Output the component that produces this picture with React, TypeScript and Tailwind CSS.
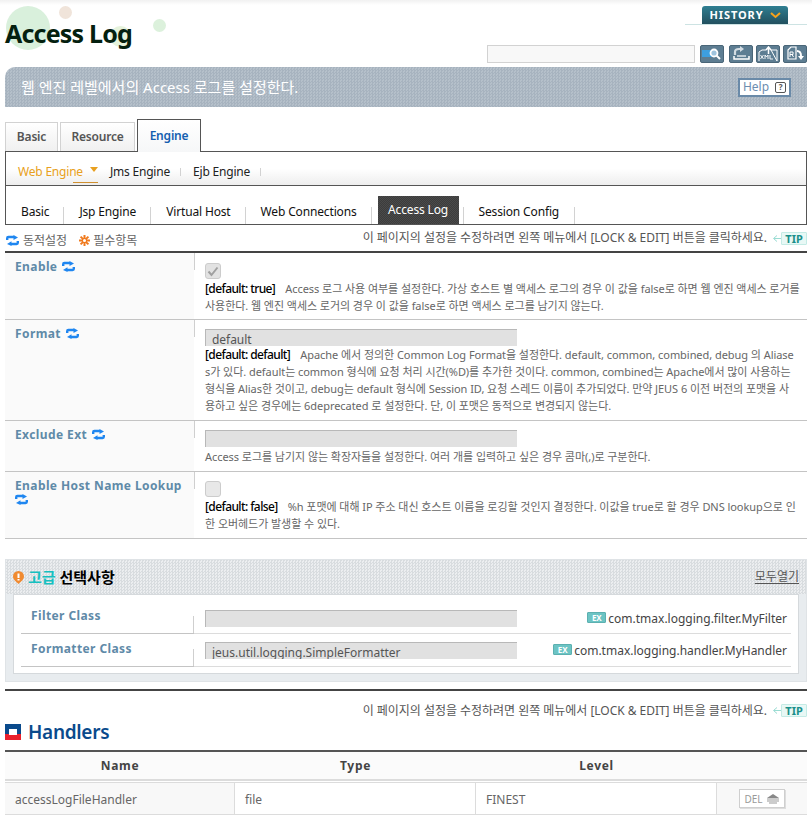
const SyncIcon = ({ className = "" }: { className?: string }) => (
  <svg width="13" height="11" viewBox="0 0 13 11" className={className}>
    <path d="M1.200 5V3.200q0-1.200 1.200-1.200H8" fill="none" stroke="#1f86f0" strokeWidth="2.400" />
    <path d="M7.500 0l4.500 2.500-4.500 2.500z" fill="#1f86f0" />
    <path d="M11.800 6v1.800q0 1.200-1.200 1.200H5" fill="none" stroke="#1f86f0" strokeWidth="2.400" />
    <path d="M5.500 6.200 1 9l4.500 2z" fill="#1f86f0" />
  </svg>
);

const StarIcon = () => (
  <svg width="11" height="11" viewBox="0 0 11 11">
    <g stroke="#f07a1e" strokeWidth="2">
      <path d="M5.500 0v11M0 5.500h11M1.600 1.600l7.800 7.800M9.400 1.600l-7.800 7.800" />
    </g>
    <circle cx="5.500" cy="5.500" r="1.500" fill="#fff" />
  </svg>
);

const ToolBtn = ({ children }: { children: React.ReactNode }) => (
  <div className="flex h-[18px] w-6 items-center justify-center rounded-[2px] border border-[#4a6678] bg-[#5d7d92]">
    <svg width="22" height="16" viewBox="0 0 22 16">
      {children}
    </svg>
  </div>
);

const TipBadge = () => (
  <div className="flex items-center">
    <svg width="9" height="9" viewBox="0 0 9 9">
      <path d="M9 4.500H2M5 1.500 1.500 4.500 5 7.500" fill="none" stroke="#9adcd3" strokeWidth="1" />
    </svg>
    <div className="flex h-[13px] w-[26px] items-center justify-center rounded-[1px] border border-[#c4ebe5] bg-[#e8f8f5] text-[11px] font-bold leading-none text-[#1a8f8a]">
      TIP
    </div>
  </div>
);

const TipLine = () => (
  <div className="flex items-center gap-[5px] text-[12px] leading-none tracking-[-0.03px] text-[#555]">
    <span>이 페이지의 설정을 수정하려면 왼쪽 메뉴에서 [LOCK &amp; EDIT] 버튼을 클릭하세요.</span>
    <TipBadge />
  </div>
);

const Default = ({ children }: { children: React.ReactNode }) => (
  <span className="mr-[10px] text-[12px] font-medium tracking-[-0.6px] text-black">{children}</span>
);

const TextBox = ({ value }: { value?: string }) => (
  <div className="h-[17px] w-[312px] overflow-hidden border-t border-l border-[#b8b8b8] bg-[#e1e1e1] pl-[6px] text-[12px] leading-[19px] text-[#555]">
    {value}
  </div>
);

const Row = ({
  label,
  h,
  children,
}: {
  label: React.ReactNode;
  h: string;
  children: React.ReactNode;
}) => (
  <div className={`flex border-b border-[#c4c4c4] ${h}`}>
    <div className="w-[189px] shrink-0 bg-[#fafafa] pl-[10px] pt-[5px] text-[12px] font-bold leading-[17px] tracking-[0.4px] text-[#5f8aa8]">
      {label}
    </div>
    <div className="h-[17px] w-px shrink-0 bg-[#cfcfcf]" />
    <div className="min-w-0 flex-1 overflow-hidden whitespace-nowrap pl-[10px] text-[11px] leading-[17px] tracking-[-0.05px] text-[#666]">
      {children}
    </div>
  </div>
);

const OptionRow = ({
  label,
  value,
  example,
  rowH,
  labelTop,
  boxTop,
}: {
  label: string;
  value?: string;
  example: string;
  rowH: string;
  labelTop: string;
  boxTop: string;
}) => (
  <div className={`flex border-b border-[#dcdcdc] ${rowH}`}>
    <div className="-mb-px flex w-[173px] shrink-0 border-b border-[#c4c4c4]">
      <div className={`flex-1 pl-[10px] text-[12px] font-bold leading-[17px] tracking-[0.4px] text-[#5f8aa8] ${labelTop}`}>
        {label}
      </div>
      <div className="h-[17px] w-px self-end bg-[#cfcfcf]" />
    </div>
    <div className={`ml-[11px] ${boxTop}`}>
      <TextBox value={value} />
    </div>
    <div className={`flex flex-1 items-start justify-end pr-[4px] ${boxTop}`}>
      <span className="mr-[2px] mt-[2px] flex h-[11px] w-[19px] items-center justify-center rounded-[1px] border border-[#5cb0b0] bg-[#6cc4c4] text-[8px] font-bold leading-none text-white">
        EX
      </span>
      <span className="text-[12px] leading-[17px] text-[#444]">{example}</span>
    </div>
  </div>
);

const NAV = ["Basic", "Jsp Engine", "Virtual Host", "Web Connections"];

export default function App() {
  return (
    <div
      className="relative h-[821px] w-[812px] overflow-hidden bg-white text-[#555]"
      style={{ fontFamily: '"Noto Sans", "Noto Sans CJK KR", sans-serif' }}
    >
      <div className="h-[5px] bg-gradient-to-b from-[#f1f1f1] to-white" />

      {/* decor dots behind the title */}
      <div className="absolute left-[6px] top-[6px] h-[44px] w-[44px] rounded-full bg-[#d9f0dc]" />
      <div className="absolute left-[59px] top-[6px] h-[13px] w-[13px] rounded-full bg-[#f0e4da]" />
      <div className="absolute left-[153px] top-[19px] h-[13px] w-[13px] rounded-full bg-[#dcf1dc]" />
      <div className="absolute left-[110px] top-[26px] h-[21px] w-[21px] rounded-full bg-[#e6f3dc]" />

      {/* header */}
      <div className="relative flex h-[62px] justify-between pl-[5px] pr-[5px]">
        <h1 className="pt-[12px] text-[25px] font-bold leading-[32px] tracking-[-0.8px] text-[#04200f]">
          Access Log
        </h1>
        <div className="flex flex-col items-end">
          <div className="mt-[1px] flex h-[19px] w-[122px] items-end justify-center border-b border-[#cde3e3] pr-[2px]">
            <div className="flex h-[18px] w-[86px] items-center justify-center gap-[6px] rounded-t-[3px] bg-gradient-to-b from-[#2f7f92] to-[#22505f] pt-[1px] text-[11px] font-bold tracking-[0.9px] text-white">
              HISTORY
              <svg width="11" height="7" viewBox="0 0 11 7">
                <path d="M1 1l4.500 4L10 1" fill="none" stroke="#f5a21c" strokeWidth="2" />
              </svg>
            </div>
          </div>
          <div className="mt-[20px] flex items-center">
            <div className="mr-[5px] h-[18px] w-[208px] border border-[#d2d2d2] bg-[#f8f8f8]" />
            <div className="mr-[5px]">
              <ToolBtn>
                <rect x="1" y="4" width="10" height="7" fill="#3d9fe0" />
                <circle cx="13" cy="7" r="3.500" fill="#9fc4de" stroke="#fff" strokeWidth="1.800" />
                <path d="M15.500 9.500l3.500 3.500" stroke="#fff" strokeWidth="2" />
              </ToolBtn>
            </div>
            <div className="mr-[3px]">
              <ToolBtn>
                <path d="M5 9V6Q5 3 9 3h2" fill="none" stroke="#d4dde3" strokeWidth="2.200" />
                <path d="M10 0l4 3-4 3z" fill="#d4dde3" />
                <path d="M4 10v3h15v-3" fill="none" stroke="#fff" strokeWidth="1.500" />
                <path d="M7 10h9" stroke="#fff" strokeWidth="1.200" />
              </ToolBtn>
            </div>
            <div className="mr-[3px]">
              <ToolBtn>
                <path d="M2 15V6l3-2h4M14 4h6v11z" fill="none" stroke="#fff" strokeWidth="1" />
                <path d="M11.500 8V2M9 4l2.500-3L14 4" fill="none" stroke="#fff" strokeWidth="1.500" />
                <path d="M3.500 9l3 4M6.500 9l-3 4M8 13V9l1.500 2L11 9v4M13 9v4h3" fill="none" stroke="#fff" strokeWidth="0.900" />
              </ToolBtn>
            </div>
            <ToolBtn>
              <path d="M4 4l3-3h5v12H4z" fill="none" stroke="#fff" strokeWidth="1.200" />
              <path d="M6 11V6h3v2.500H6M8 8.500l1.500 2.500" fill="none" stroke="#fff" strokeWidth="1" />
              <path d="M13 5q4 0 4 5" fill="none" stroke="#fff" strokeWidth="2" />
              <path d="M14 10h6l-3 4z" fill="#fff" />
            </ToolBtn>
          </div>
        </div>
      </div>

      {/* banner */}
      <div className="mx-[5px] flex h-[40px] items-center justify-between rounded-tl-[10px] bg-[repeating-conic-gradient(#a7b3bf_0_25%,#b5c0ca_0_50%)] bg-[length:3px_3px] pl-[16px] pr-[16px]">
        <span className="text-[15px] text-white">웹 엔진 레벨에서의 Access 로그를 설정한다.</span>
        <div className="flex h-[19px] w-[53px] items-center justify-center gap-[6px] border-2 border-[#6a8aa8] bg-white text-[12px] leading-none text-[#6d8db0]">
          Help
          <span className="flex h-[11px] w-[11px] items-center justify-center rounded-[2px] border border-[#555] text-[8px] font-bold text-[#555]">
            ?
          </span>
        </div>
      </div>

      {/* main tabs */}
      <div className="ml-[5px] mt-[12px] flex h-[32px] items-end gap-[2px]">
        <div className="flex h-[29px] w-[53px] items-center justify-center border border-b-0 border-[#d2d2d2] bg-gradient-to-b from-white to-[#f0f0f0] text-[12px] font-semibold tracking-[-0.2px] text-[#555]">
          Basic
        </div>
        <div className="flex h-[29px] w-[75px] items-center justify-center border border-b-0 border-[#d2d2d2] bg-gradient-to-b from-white to-[#f0f0f0] text-[12px] font-semibold tracking-[-0.2px] text-[#555]">
          Resource
        </div>
        <div className="relative z-10 -mb-px flex h-[33px] w-[64px] items-center justify-center border border-b-0 border-[#555] bg-gradient-to-b from-white to-[#f6f7f8] text-[12px] font-semibold tracking-[-0.2px] text-[#1560b0]">
          Engine
        </div>
      </div>

      {/* engine nav */}
      <div className="mx-[5px] flex h-[35px] items-center border border-[#555] bg-gradient-to-b from-white via-white to-[#eeeeee] pl-[12px] pt-[6px] text-[12px] tracking-[-0.2px]">
        <span className="relative text-[#e8a020]">
          Web Engine
          <span className="absolute -bottom-[2px] -right-[15px] h-px w-[25px] bg-[#d09030]" />
        </span>
        <svg width="8" height="5" viewBox="0 0 8 5" className="mb-[4px] ml-[7px]">
          <path d="M0 0h8L4 5z" fill="#e8a020" />
        </svg>
        <span className="ml-[12px] text-[#222]">Jms Engine</span>
        <span className="mx-[10px] h-[8px] w-px bg-[#d2d2d2]" />
        <span className="ml-[2px] text-[#222]">Ejb Engine</span>
        <span className="ml-[10px] h-[8px] w-px bg-[#d2d2d2]" />
      </div>

      {/* sub nav */}
      <div className="mx-[5px] -mt-px flex h-[40px] items-end border border-[#555] pl-[15px] text-[12px] tracking-[-0.15px] text-[#111]">
        {NAV.map((item) => (
          <div key={item} className="flex items-end">
            <span className="pb-[4px] leading-[17px]">{item}</span>
            <span className="ml-[14px] mr-[15px] h-[17px] w-px bg-[#d2d2d2]" />
          </div>
        ))}
        <div className="-ml-[9px] flex h-[28px] w-[81px] items-center justify-center bg-[repeating-conic-gradient(#3c3c3c_0_25%,#4a4a4a_0_50%)] bg-[length:2px_2px] text-white">
          Access Log
        </div>
        <span className="ml-[4px] h-[17px] w-px bg-[#d2d2d2]" />
        <span className="px-[15px] pb-[4px] leading-[17px]">Session Config</span>
        <span className="h-[17px] w-px bg-[#d2d2d2]" />
      </div>

      {/* legend */}
      <div className="mx-[5px] flex h-[26px] items-center justify-between pl-[1px] text-[12px] text-[#666]">
        <div className="mt-[5px] flex items-center">
          <SyncIcon className="mr-[4px]" />
          <span>동적설정</span>
          <span className="ml-[12px] mr-[3px] flex">
            <StarIcon />
          </span>
          <span>필수항목</span>
        </div>
        <TipLine />
      </div>

      {/* properties */}
      <div className="mx-[5px] border-t-2 border-[#444]">
        <Row
          h="h-[67px]"
          label={
            <span className="flex items-center gap-[5px]">
              Enable <SyncIcon />
            </span>
          }
        >
          <div className="pt-[10px]">
            <div className="flex h-[16px] w-[16px] items-center justify-center rounded-[3px] border border-[#cccccc] bg-[#e2e2e2]">
              <svg width="12" height="11" viewBox="0 0 12 11">
                <path d="M1.500 5.500 4.500 9 10.500 1.500" fill="none" stroke="#a0a0a0" strokeWidth="2" />
              </svg>
            </div>
          </div>
          <div className="mt-[1px]">
            <Default>[default: true]</Default>
            Access 로그 사용 여부를 설정한다. 가상 호스트 별 액세스 로그의 경우 이 값을 false로 하면 웹 엔진 액세스 로거를
          </div>
          <div>사용한다. 웹 엔진 액세스 로거의 경우 이 값을 false로 하면 액세스 로그를 남기지 않는다.</div>
        </Row>
        <Row
          h="h-[101px]"
          label={
            <span className="flex items-center gap-[5px]">
              Format <SyncIcon />
            </span>
          }
        >
          <div className="pt-[9px]">
            <TextBox value="default" />
          </div>
          <div>
            <Default>[default: default]</Default>
            Apache 에서 정의한 Common Log Format을 설정한다. default, common, combined, debug 의 Aliase
          </div>
          <div>s가 있다. default는 common 형식에 요청 처리 시간(%D)를 추가한 것이다. common, combined는 Apache에서 많이 사용하는</div>
          <div>형식을 Alias한 것이고, debug는 default 형식에 Session ID, 요청 스레드 이름이 추가되었다. 만약 JEUS 6 이전 버전의 포맷을 사</div>
          <div>용하고 싶은 경우에는 6deprecated 로 설정한다. 단, 이 포맷은 동적으로 변경되지 않는다.</div>
        </Row>
        <Row
          h="h-[51px]"
          label={
            <span className="flex items-center gap-[5px]">
              Exclude Ext <SyncIcon />
            </span>
          }
        >
          <div className="pt-[9px]">
            <TextBox />
          </div>
          <div className="mt-[1px]">Access 로그를 남기지 않는 확장자들을 설정한다. 여러 개를 입력하고 싶은 경우 콤마(,)로 구분한다.</div>
        </Row>
        <Row
          h="h-[67px]"
          label={
            <div>
              <div>Enable Host Name Lookup</div>
              <SyncIcon />
            </div>
          }
        >
          <div className="pt-[9px]">
            <div className="h-[16px] w-[16px] rounded-[3px] border border-[#cccccc] bg-[#e8e8e8]" />
          </div>
          <div className="mt-[1px]">
            <Default>[default: false]</Default>
            %h 포맷에 대해 IP 주소 대신 호스트 이름을 로깅할 것인지 결정한다. 이값을 true로 할 경우 DNS lookup으로 인
          </div>
          <div>한 오버헤드가 발생할 수 있다.</div>
        </Row>
      </div>

      {/* advanced options */}
      <div className="mx-[5px] mt-[20px] h-[123px] border border-[#dfe3e6] bg-[#e8ecef] px-[7px]">
        <div className="-mx-[7px] flex h-[34px] items-center justify-between bg-[repeating-conic-gradient(#d8dcdf_0_25%,#eceef0_0_50%)] bg-[length:3px_3px] pl-[7px] pr-[7px]">
          <div className="flex items-center gap-[4px] text-[15px] font-bold leading-none">
            <svg width="11" height="13" viewBox="0 0 11 13">
              <path d="M5.500 0a5.500 5.500 0 0 1 5.500 5.500c0 3-3 5-5.500 7.500C3 10.500 0 8.500 0 5.500A5.500 5.500 0 0 1 5.500 0z" fill="#f08a30" />
              <rect x="4.500" y="2.500" width="2" height="4.500" fill="#fff" />
              <rect x="4.500" y="8" width="2" height="1.500" fill="#fff" />
            </svg>
            <span>
              <span className="text-[#16c0c0]">고급</span> <span className="text-black">선택사항</span>
            </span>
          </div>
          <span className="text-[12px] leading-none text-[#555] underline underline-offset-2">모두열기</span>
        </div>
        <div className="h-[80px] border border-[#d5d9dc] bg-white px-[7px]">
          <OptionRow
            label="Filter Class"
            example="com.tmax.logging.filter.MyFilter"
            rowH="h-[39px]"
            labelTop="pt-[12px]"
            boxTop="pt-[15px]"
          />
          <OptionRow
            label="Formatter Class"
            value="jeus.util.logging.SimpleFormatter"
            example="com.tmax.logging.handler.MyHandler"
            rowH="h-[33px]"
            labelTop="pt-[6px]"
            boxTop="pt-[8px]"
          />
        </div>
      </div>

      <div className="mx-[5px] mt-[7px] h-[2px] bg-[#444]" />

      <div className="mx-[5px] mt-[13px] flex justify-end">
        <TipLine />
      </div>

      {/* handlers */}
      <div className="mx-[5px] mt-px flex h-[28px] items-center gap-[7px]">
        <div className="relative h-[16px] w-[16px] bg-[#0a4a8c]">
          <div className="absolute bottom-0 left-0 h-[6px] w-full bg-[#e8202c]" />
          <div className="absolute left-[4px] top-[5px] h-[6px] w-[8px] bg-white" />
        </div>
        <h2 className="text-[19px] font-semibold leading-none tracking-[-0.3px] text-[#0a4a8c]">Handlers</h2>
      </div>

      <div className="mx-[5px] mt-[4px] border-t-2 border-[#555] text-[12px]">
        <div className="grid h-[29px] grid-cols-[230px_241px_241px_1fr] items-center border-b-2 border-[#dcdcdc] bg-[#fbfbfb] pt-px text-center font-bold tracking-[0.7px] text-[#444]">
          <div>Name</div>
          <div>Type</div>
          <div>Level</div>
          <div />
        </div>
        <div className="mt-px grid h-[33px] grid-cols-[230px_241px_241px_1fr] items-center border-y border-[#dcdcdc] text-[#666]">
          <div className="flex h-full items-center border-r border-[#dcdcdc] bg-[#f8f8f8] pl-[10px] pt-[2px]">accessLogFileHandler</div>
          <div className="flex h-full items-center border-r border-[#dcdcdc] pl-[10px] pt-[2px]">file</div>
          <div className="flex h-full items-center border-r border-[#dcdcdc] pl-[10px] pt-[2px]">FINEST</div>
          <div className="flex h-full items-center justify-center bg-[#f8f8f8]">
            <div className="flex h-[19px] w-[46px] items-center justify-center gap-[3px] border border-[#cfcfcf] bg-white text-[10px] leading-none text-[#999] shadow-[1px_1px_0_#ddd]">
              DEL
              <svg width="14" height="11" viewBox="0 0 14 11">
                <path d="M1 5 7 1l6 4z" fill="#888" />
                <path d="M1 6h12M1 8h12M3 10h8" stroke="#999" strokeWidth="1" />
              </svg>
            </div>
          </div>
        </div>
      </div>
    </div>
  );
}
